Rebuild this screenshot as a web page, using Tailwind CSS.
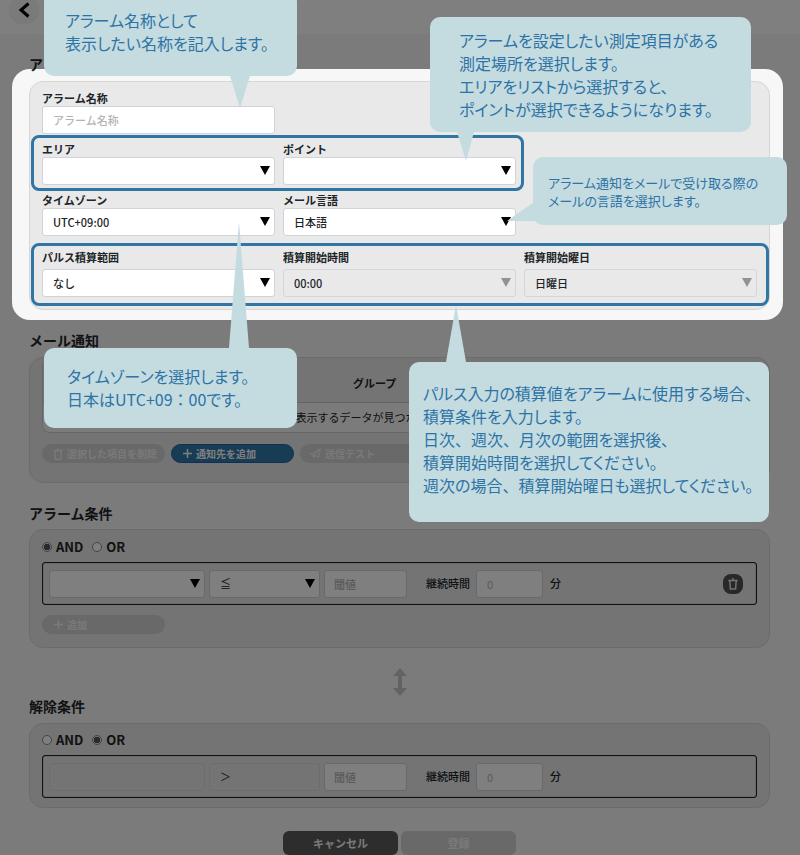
<!DOCTYPE html>
<html lang="ja">

<head>
    <meta charset="UTF-8">
    <meta name="viewport" content="width=device-width, initial-scale=1.0">
    <title>アラーム設定</title>
    <script src="https://cdn.jsdelivr.net/npm/@tailwindcss/browser@4"></script>
    <style>
        body {
            font-family: "Noto Sans CJK JP", "Noto Sans", sans-serif;
        }

        .callout-text {
            font-feature-settings: "palt";
        }

        .callout-text .full {
            font-feature-settings: normal;
        }
    </style>
</head>

<body class="bg-[#f7f7f7] text-[#212529]">
    <div class="relative overflow-hidden min-h-screen">

        <!-- Header -->
        <header class="flex items-start h-[34px] bg-white px-[9px]">
            <button type="button" aria-label="戻る" class="size-[30px] -mt-[5px] rounded-full bg-[#f4f4f4] flex items-center justify-center">
                <svg class="size-4" viewBox="0 0 16 16" fill="none" stroke="#000" stroke-width="3"><path d="M12.500 1.500 5 8l7.500 6.500"/></svg>
            </button>
        </header>

        <main class="pl-[29px] pr-[30px] pt-5 flex flex-col gap-5">

            <!-- アラーム -->
            <section>
                <h2 class="text-sm leading-5 font-bold mb-[7px]">アラーム</h2>
                <div class="relative border border-[#d6d6d6] rounded-[14px] bg-[#e9e9e9] px-3 pt-2 pb-3">
                    <div class="grid grid-cols-3 gap-x-2 gap-y-[7px]">
                        <div>
                            <label for="alarmName" class="block text-[11px] leading-4 font-bold">アラーム名称</label>
                            <input type="text" id="alarmName" placeholder="アラーム名称" class="block w-full h-7 rounded-[3px] border border-[#ced4da] bg-white px-[10px] text-[11px] font-medium placeholder:text-[#b4b4b4]">
                        </div>
                        <div class="relative col-span-2 col-start-1 grid grid-cols-2 gap-x-2">
                            <div>
                                <label for="area" class="block text-[11px] leading-4 font-bold">エリア</label>
                                <div class="relative">
                                    <select id="area" class="block appearance-none w-full h-7 rounded-[3px] border border-[#ced4da] bg-white px-[10px] text-[11px]"><option></option></select>
                                    <svg class="pointer-events-none absolute right-[5px] top-[9px] w-[10px] h-[9px]" viewBox="0 0 10 9"><path d="M0 0h10L5 9z"/></svg>
                                </div>
                            </div>
                            <div>
                                <label for="point" class="block text-[11px] leading-4 font-bold">ポイント</label>
                                <div class="relative">
                                    <select id="point" class="block appearance-none w-full h-7 rounded-[3px] border border-[#ced4da] bg-white px-[10px] text-[11px]"><option></option></select>
                                    <svg class="pointer-events-none absolute right-[5px] top-[9px] w-[10px] h-[9px]" viewBox="0 0 10 9"><path d="M0 0h10L5 9z"/></svg>
                                </div>
                            </div>
                            <div class="pointer-events-none absolute z-20 -left-[11px] -right-2 -top-[6px] -bottom-[6px] border-3 border-[#3075a3] rounded-lg"></div>
                        </div>
                        <div class="col-start-1">
                            <label for="timezone" class="block text-[11px] leading-4 font-bold">タイムゾーン</label>
                            <div class="relative">
                                <select id="timezone" class="block appearance-none w-full h-7 rounded-[3px] border border-[#ced4da] bg-white px-[10px] text-[11px] font-medium"><option>UTC+09:00</option></select>
                                <svg class="pointer-events-none absolute right-[5px] top-[9px] w-[10px] h-[9px]" viewBox="0 0 10 9"><path d="M0 0h10L5 9z"/></svg>
                            </div>
                        </div>
                        <div>
                            <label for="mailLang" class="block text-[11px] leading-4 font-bold">メール言語</label>
                            <div class="relative">
                                <select id="mailLang" class="block appearance-none w-full h-7 rounded-[3px] border border-[#ced4da] bg-white px-[10px] text-[11px] font-medium"><option>日本語</option></select>
                                <svg class="pointer-events-none absolute right-[5px] top-[9px] w-[10px] h-[9px]" viewBox="0 0 10 9"><path d="M0 0h10L5 9z"/></svg>
                            </div>
                        </div>
                    </div>

                    <div class="relative mt-[13px] grid grid-cols-3 gap-x-2">
                        <div>
                            <label for="pulseRange" class="block text-[11px] leading-4 font-bold mb-1">パルス積算範囲</label>
                            <div class="relative">
                                <select id="pulseRange" class="block appearance-none w-full h-7 rounded-[3px] border border-[#ced4da] bg-white px-[10px] text-[11px] font-medium"><option>なし</option></select>
                                <svg class="pointer-events-none absolute right-[5px] top-[9px] w-[10px] h-[9px]" viewBox="0 0 10 9"><path d="M0 0h10L5 9z"/></svg>
                            </div>
                        </div>
                        <div>
                            <label for="startTime" class="block text-[11px] leading-4 font-bold mb-1">積算開始時間</label>
                            <div class="relative">
                                <select id="startTime" disabled class="block appearance-none w-full h-7 rounded-[3px] border border-[#d3d6dc] bg-[#e9e9e9] opacity-100 px-[10px] text-[11px] font-medium"><option>00:00</option></select>
                                <svg class="pointer-events-none absolute right-[5px] top-[9px] w-[10px] h-[9px]" viewBox="0 0 10 9"><path d="M0 0h10L5 9z" fill="#929292"/></svg>
                            </div>
                        </div>
                        <div>
                            <label for="startDay" class="block text-[11px] leading-4 font-bold mb-1">積算開始曜日</label>
                            <div class="relative">
                                <select id="startDay" disabled class="block appearance-none w-full h-7 rounded-[3px] border border-[#d3d6dc] bg-[#e9e9e9] opacity-100 px-[10px] text-[11px] font-medium"><option>日曜日</option></select>
                                <svg class="pointer-events-none absolute right-[5px] top-[9px] w-[10px] h-[9px]" viewBox="0 0 10 9"><path d="M0 0h10L5 9z" fill="#929292"/></svg>
                            </div>
                        </div>
                        <div class="pointer-events-none absolute z-20 -left-[11px] -right-3 -top-[6px] -bottom-[9px] border-3 border-[#3075a3] rounded-lg"></div>
                    </div>

                    <!-- Spotlight: dims everything outside this box -->
                    <div class="pointer-events-none absolute z-10 -left-[18px] -right-[14px] -top-[13px] -bottom-[11px] rounded-[18px] shadow-[0_0_0_2000px_rgba(0,0,0,0.5)]"></div>
                </div>
            </section>

            <!-- メール通知 -->
            <section>
                <h2 class="text-sm leading-5 font-bold mb-[7px]">メール通知</h2>
                <div class="border border-[#d6d6d6] rounded-[14px] bg-[#e9e9e9] px-3 pt-[6px] pb-[19px]">
                    <div class="rounded-b-lg border-b border-x border-[#cdcdcd] overflow-hidden">
                        <table class="w-full text-[11px] leading-4">
                            <thead class="bg-[#e9e9e9]">
                                <tr class="h-[38px] border-b border-[#c9c9c9]">
                                    <th class="text-left w-[310px] font-bold">アドレス</th>
                                    <th class="text-left font-bold">グループ</th>
                                </tr>
                            </thead>
                            <tbody class="bg-[#f7f7f7]">
                                <tr class="h-[30px]">
                                    <td colspan="2" class="text-center">表示するデータが見つかりませんでした。</td>
                                </tr>
                            </tbody>
                        </table>
                    </div>
                    <div class="mt-[11px] flex gap-[6px] text-[10px] font-bold">
                        <button type="button" disabled class="w-[123px] h-[19px] rounded-full bg-[#d2d2d2] text-[#f4f4f4] flex items-center gap-1 pl-[11px]">
                            <svg class="w-[10px] h-3" viewBox="0 0 10 12" fill="none" stroke="currentColor" stroke-width="1.300"><path d="M.5 2.500h9M5 .3v2M1.800 2.500l.4 8.800h5.600l.4-8.800"/></svg>
                            選択した項目を削除
                        </button>
                        <button type="button" class="w-[123px] h-[19px] rounded-full border border-[#1c5fae] bg-[#2f79a9] text-white flex items-center gap-1 pl-[11px]">
                            <svg class="w-[9px] h-[9px]" viewBox="0 0 9 9" fill="none" stroke="currentColor" stroke-width="1.500"><path d="M4.500 0v9M0 4.500h9"/></svg>
                            通知先を追加
                        </button>
                        <button type="button" disabled class="w-[123px] h-[19px] rounded-full bg-[#d2d2d2] text-[#f4f4f4] flex items-center gap-1 pl-[10px]">
                            <svg class="w-[11px] h-[11px]" viewBox="0 0 12 12" fill="currentColor"><path fill-rule="evenodd" d="M12 0 0 6.500l3 1.300V12l2.400-3.100L9.500 10.500zM9.800 2.300 4 7.200 2.300 6.500zM10.300 2.700 8.700 9 5.200 7.600z"/></svg>
                            送信テスト
                        </button>
                    </div>
                </div>
            </section>

            <!-- アラーム条件 -->
            <section>
                <h2 class="text-sm leading-5 font-bold mb-[6px]">アラーム条件</h2>
                <div class="border border-[#d6d6d6] rounded-[14px] bg-[#e9e9e9] px-3 pt-[7px] pb-[13px]">
                    <div class="flex items-center gap-[9px] text-[13px] leading-5 font-bold">
                        <label class="flex items-center gap-1"><input type="radio" name="alarmLogic" checked class="appearance-none size-[10px] rounded-full border border-[#8a8a8a] bg-[radial-gradient(circle,#555_0_3px,#e9e9e9_3px)]">AND</label>
                        <label class="flex items-center gap-1"><input type="radio" name="alarmLogic" class="appearance-none size-[10px] rounded-full border border-[#8a8a8a] bg-white">OR</label>
                    </div>
                    <div class="mt-[5px] flex items-center h-[43px] border border-[#222] rounded-[3px] pl-[6px] pr-[13px] text-[11px] shadow-[inset_0_0_1px_#222]">
                        <div class="relative w-[156px]">
                            <select aria-label="測定項目" class="block appearance-none w-full h-7 rounded-[3px] border border-[#ced4da] bg-white px-[10px]"><option></option></select>
                            <svg class="pointer-events-none absolute right-[5px] top-[9px] w-[10px] h-[9px]" viewBox="0 0 10 9"><path d="M0 0h10L5 9z"/></svg>
                        </div>
                        <div class="relative w-[111px] ml-1">
                            <select aria-label="比較" class="block appearance-none w-full h-7 rounded-[3px] border border-[#ced4da] bg-white px-[10px]"><option>≦</option></select>
                            <svg class="pointer-events-none absolute right-[5px] top-[9px] w-[10px] h-[9px]" viewBox="0 0 10 9"><path d="M0 0h10L5 9z"/></svg>
                        </div>
                        <input type="text" aria-label="閾値" placeholder="閾値" class="w-[83px] h-7 ml-1 rounded-[3px] border border-[#ced4da] bg-white px-[9px] font-medium placeholder:text-[#b4b4b4]">
                        <label for="duration" class="ml-[19px] font-medium">継続時間</label>
                        <input type="text" id="duration" placeholder="0" class="w-[67px] h-7 ml-[6px] rounded-[3px] border border-[#ced4da] bg-white px-[10px] placeholder:text-[#b4b4b4]">
                        <span class="ml-[7px] font-medium">分</span>
                        <button type="button" aria-label="削除" class="ml-auto size-5 rounded-lg bg-[#505050] text-[#e4e4e4] flex items-center justify-center">
                            <svg class="w-[10px] h-3" viewBox="0 0 10 12" fill="none" stroke="currentColor" stroke-width="1.500"><path d="M.3 2.500h9.400M5 0v2.500M1.800 2.500l.6 8.500h5.200l.6-8.500"/></svg>
                        </button>
                    </div>
                    <button type="button" disabled class="mt-[10px] w-[123px] h-[19px] rounded-full bg-[#d2d2d2] text-[#f4f4f4] text-[10px] font-bold flex items-center gap-1 pl-3">
                        <svg class="w-[9px] h-[9px]" viewBox="0 0 9 9" fill="none" stroke="currentColor" stroke-width="1.500"><path d="M4.500 0v9M0 4.500h9"/></svg>
                        追加
                    </button>
                </div>
            </section>

            <!-- 解除条件 -->
            <section>
                <svg class="block mx-auto w-[14px] h-7" viewBox="0 0 14 28" fill="#c4c4c4"><path d="M7 0l7 8H9v12h5l-7 8-7-8h5V8H0z"/></svg>
                <h2 class="text-sm leading-5 font-bold mb-[7px]">解除条件</h2>
                <div class="border border-[#d6d6d6] rounded-[14px] bg-[#e9e9e9] px-3 pt-[6px] pb-[9px]">
                    <div class="flex items-center gap-[9px] text-[13px] leading-5 font-bold">
                        <label class="flex items-center gap-1"><input type="radio" name="releaseLogic" disabled class="appearance-none size-[10px] rounded-full border border-[#8a8a8a] bg-white">AND</label>
                        <label class="flex items-center gap-1"><input type="radio" name="releaseLogic" disabled checked class="appearance-none size-[10px] rounded-full border border-[#8a8a8a] bg-[radial-gradient(circle,#555_0_3px,#e9e9e9_3px)]">OR</label>
                    </div>
                    <div class="mt-[5px] flex items-center h-[43px] border border-[#222] rounded-[3px] pl-[6px] pr-[13px] text-[11px] shadow-[inset_0_0_1px_#222]">
                        <select aria-label="測定項目" disabled class="appearance-none w-[156px] h-7 rounded-[3px] border border-[#d9dbe0] bg-[#e9e9e9] opacity-100 px-[10px]"><option></option></select>
                        <select aria-label="比較" disabled class="appearance-none w-[111px] h-7 ml-1 rounded-[3px] border border-[#d9dbe0] bg-[#e9e9e9] opacity-100 px-[10px]"><option>＞</option></select>
                        <input type="text" aria-label="閾値" placeholder="閾値" class="w-[83px] h-7 ml-1 rounded-[3px] border border-[#ced4da] bg-white px-[9px] font-medium placeholder:text-[#b4b4b4]">
                        <label for="releaseDuration" class="ml-[19px] font-medium">継続時間</label>
                        <input type="text" id="releaseDuration" placeholder="0" class="w-[67px] h-7 ml-[6px] rounded-[3px] border border-[#ced4da] bg-white px-[10px] placeholder:text-[#b4b4b4]">
                        <span class="ml-[7px] font-medium">分</span>
                    </div>
                </div>
            </section>

            <div class="mt-[3px] flex justify-center gap-[3px] text-[11px] font-bold">
                <button type="button" class="w-[115px] h-6 rounded-md bg-[#5a5a5a] text-[#f4f4f4]">キャンセル</button>
                <button type="button" disabled class="w-[115px] h-6 rounded-md bg-[#d2d2d2] text-[#f4f4f4]">登録</button>
            </div>
        </main>

        <!-- Callouts -->
        <div class="callout-text text-[#2d73a5] font-normal text-[16px] leading-[23px]">
            <div class="absolute z-30 left-[44px] -top-2 w-[253px] h-[84px] rounded-[10px] bg-[#c4dbe0] pl-[21px] pt-[17px] whitespace-nowrap">
                <p>アラーム名称として<br>表示したい名称を記入します。</p>
                <svg class="absolute left-[186px] top-full w-5 h-8" viewBox="0 0 20 32" fill="#c4dbe0"><path d="M0 0h20L10 32z"/></svg>
            </div>
            <div class="absolute z-30 left-[430px] top-[17px] w-[321px] h-[115px] rounded-[10px] bg-[#c4dbe0] pl-[29px] pt-3 whitespace-nowrap">
                <p>アラームを設定したい測定項目がある<br>測定場所を選択します。<br>エリアをリストから選択すると、<br>ポイントが選択できるようになります。</p>
                <svg class="absolute left-[27px] top-full w-[17px] h-[29px]" viewBox="0 0 17 29" fill="#c4dbe0"><path d="M0 0h17L9 29z"/></svg>
            </div>
            <div class="absolute z-30 left-[533px] top-[157px] w-[254px] h-[68px] rounded-[10px] bg-[#c4dbe0] pl-[15px] pt-[17px] text-[13px] leading-[18px] whitespace-nowrap">
                <p>アラーム通知をメールで受け取る際の<br>メールの言語を選択します。</p>
                <svg class="absolute -left-[26px] top-[45px] w-[34px] h-5" viewBox="0 0 34 20" fill="#c4dbe0"><path d="M0 19 27 0l7 19z"/></svg>
            </div>
            <div class="absolute z-30 left-[44px] top-[348px] w-[253px] h-[80px] rounded-[10px] bg-[#c4dbe0] pl-[23px] pt-[17px] whitespace-nowrap">
                <p>タイムゾーンを選択します。<br>日本はUTC+09<span class="full">：</span>00です。</p>
                <svg class="absolute left-[185px] bottom-full w-5 h-[126px]" viewBox="0 0 20 126" fill="#c4dbe0"><path d="M0 126h20L10 0z"/></svg>
            </div>
            <div class="absolute z-30 left-[409px] top-[362px] w-[360px] h-[160px] rounded-[10px] bg-[#c4dbe0] pl-[14px] pt-5 whitespace-nowrap">
                <p>パルス入力の積算値をアラームに使用する場合、<br>積算条件を入力します。<br>日次<span class="full">、</span>週次<span class="full">、</span>月次の範囲を選択後、<br>積算開始時間を選択してください。<br>週次の場合<span class="full">、</span>積算開始曜日も選択してください。</p>
                <svg class="absolute left-[37px] bottom-full w-5 h-[57px]" viewBox="0 0 20 57" fill="#c4dbe0"><path d="M0 57h20L10 0z"/></svg>
            </div>
        </div>
    </div>
</body>

</html>
